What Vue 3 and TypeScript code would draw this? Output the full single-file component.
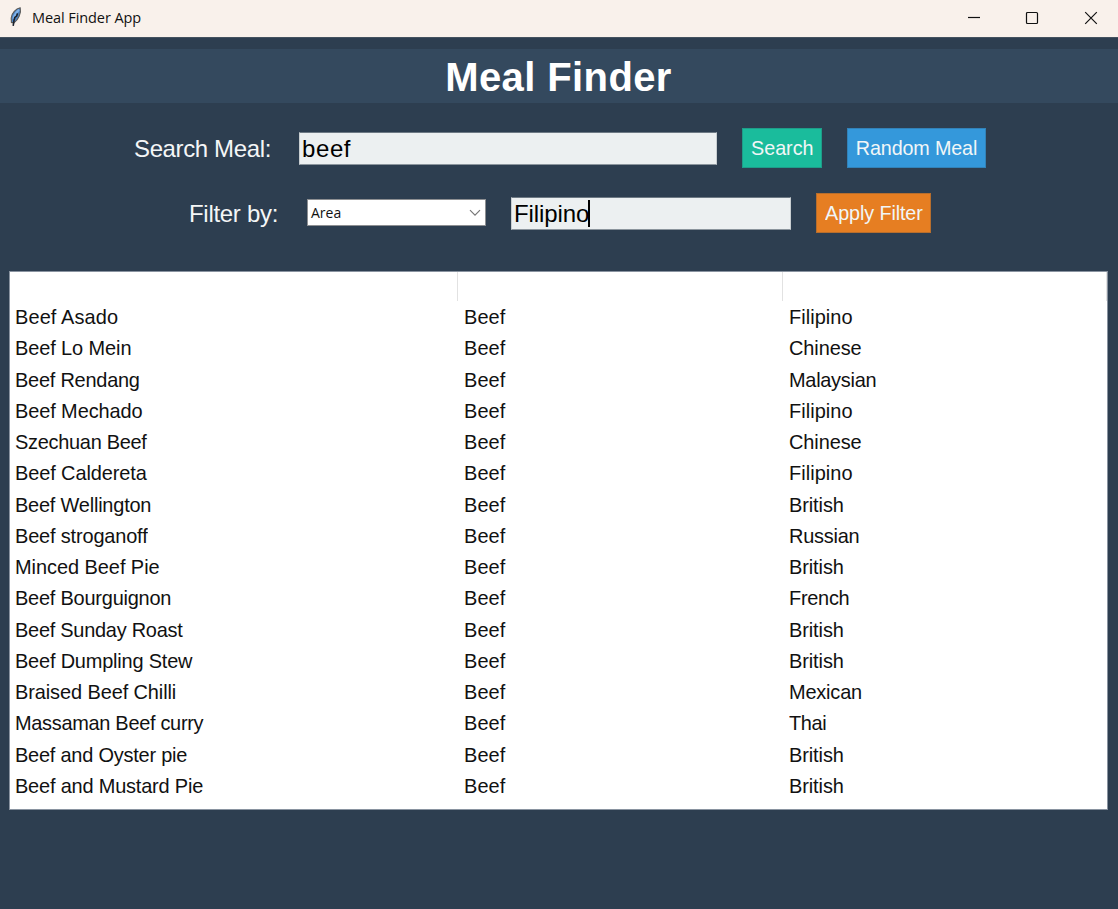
<script setup lang="ts">
import { ref } from 'vue'

interface Cell {
  text: string
  tracking: number
}

const query = ref('beef')
const filterValue = ref('Filipino')

const areaTracking: Record<string, number> = {
  Filipino: 0.05,
  Chinese: -0.1,
  Malaysian: -0.3,
  British: -0.1,
  Russian: -0.25,
  French: -0.3,
  Mexican: -0.2,
  Thai: -0.4,
}

const entries: [string, number, string][] = [
  ['Beef Asado', 0.12, 'Filipino'],
  ['Beef Lo Mein', -0.1, 'Chinese'],
  ['Beef Rendang', -0.25, 'Malaysian'],
  ['Beef Mechado', -0.1, 'Filipino'],
  ['Szechuan Beef', -0.3, 'Chinese'],
  ['Beef Caldereta', -0.1, 'Filipino'],
  ['Beef Wellington', -0.22, 'British'],
  ['Beef stroganoff', -0.17, 'Russian'],
  ['Minced Beef Pie', -0.05, 'British'],
  ['Beef Bourguignon', -0.23, 'French'],
  ['Beef Sunday Roast', -0.27, 'British'],
  ['Beef Dumpling Stew', -0.2, 'British'],
  ['Braised Beef Chilli', -0.1, 'Mexican'],
  ['Massaman Beef curry', -0.32, 'Thai'],
  ['Beef and Oyster pie', -0.23, 'British'],
  ['Beef and Mustard Pie', -0.2, 'British'],
]

const rows: Cell[][] = entries.map(([name, tracking, area]) => [
  { text: name, tracking },
  { text: 'Beef', tracking: 0.1 },
  { text: area, tracking: areaTracking[area] },
])
</script>

<template>
  <div class="window">
    <header class="titlebar">
      <svg class="feather" width="14" height="22" viewBox="0 0 14 22">
        <path d="M11.2 1.8 C7 2.6 2.6 7 2.2 12 L2.4 16.4 L5 16.8 C9 14 12.6 7 11.2 1.8Z" fill="#4f86c6" stroke="#5c5a58" stroke-width="1.1" />
        <path d="M10 3.8 C7.4 6 5.4 9 4.4 13" fill="none" stroke="#7fb2ea" stroke-width="2" />
        <path d="M8.6 7.4 L7.6 10 L5.8 11.5 L5 14.5 L4.2 19.8" fill="none" stroke="#1c222b" stroke-width="1.6" />
      </svg>
      <span class="caption">Meal Finder App</span>
      <div class="controls">
        <svg width="14" height="14" viewBox="0 0 14 14"><path d="M2 6.5H14" /></svg>
        <svg width="14" height="14" viewBox="0 0 14 14"><rect x="1.5" y="1.5" width="11" height="11" rx="1" /></svg>
        <svg width="14" height="14" viewBox="0 0 14 14"><path d="M1.2 1.2L12.8 12.8M12.8 1.2L1.2 12.8" /></svg>
      </div>
    </header>

    <h1 class="banner"><span>Meal Finder</span></h1>

    <div class="row search-row">
      <span class="label search-label">Search Meal:</span>
      <div class="entry query">{{ query }}</div>
      <button class="btn search"><span>Search</span></button>
      <button class="btn random"><span>Random Meal</span></button>
    </div>

    <div class="row filter-row">
      <span class="label filter-label">Filter by:</span>
      <div class="combo">
        <span>Area</span>
        <svg width="12" height="8" viewBox="0 0 12 8"><path d="M1 1.2L6 6.2L11 1.2" /></svg>
      </div>
      <div class="entry value">{{ filterValue }}<i class="caret"></i></div>
      <button class="btn apply"><span>Apply Filter</span></button>
    </div>

    <div class="tree">
      <div class="line head"><div></div><div></div><div></div></div>
      <div v-for="row in rows" :key="row[0].text" class="line">
        <div v-for="(cell, i) in row" :key="i" class="cell">
          <span :style="{ letterSpacing: cell.tracking + 'px' }">{{ cell.text }}</span>
        </div>
      </div>
    </div>
  </div>
</template>

<style>
body {
  margin: 0;
  background: #2d3e50;
}
</style>

<style scoped>
.window {
  width: 1118px;
  height: 909px;
  overflow: hidden;
  background: #2d3e50;
  font-family: "Liberation Sans", Arial, sans-serif;
}

.titlebar {
  display: flex;
  align-items: center;
  height: 37px;
  box-sizing: border-box;
  padding: 0 20px 1px 9px;
  background: #f9f1eb;
  box-shadow: 0 1px 0 #44525f;
}

.feather {
  margin-top: -3px;
}

.caption {
  margin: -2px 0 0 9px;
  font: 14.5px "Open Sans", "Noto Sans", sans-serif;
  letter-spacing: -0.08px;
  color: #111;
}

.controls {
  display: flex;
  gap: 45px;
  margin-left: auto;
}

.controls svg {
  fill: none;
  stroke: #111;
  stroke-width: 1.2;
}

.banner {
  display: flex;
  justify-content: center;
  align-items: center;
  height: 54px;
  box-sizing: border-box;
  padding: 2px 1px 0 0;
  margin: 12px 0 0;
  background: #34495e;
  color: #fff;
  font-size: 40px;
  font-weight: bold;
  letter-spacing: 0.4px;
}

.row {
  display: flex;
  align-items: center;
  height: 40px;
}

.search-row {
  margin-top: 25px;
  padding-left: 134px;
}

.filter-row {
  margin-top: 25px;
  padding-left: 189px;
}

.label {
  box-sizing: border-box;
  padding-top: 2px;
  font-size: 24px;
  color: #f4f6f7;
  white-space: nowrap;
}

.search-label {
  width: 165px;
  letter-spacing: -0.37px;
}

.filter-label {
  width: 118px;
  letter-spacing: -0.3px;
}

.entry {
  display: flex;
  align-items: center;
  height: 33px;
  box-sizing: border-box;
  border: 1px solid #8b959d;
  border-top-color: #6d7984;
  border-left-color: #c8ced1;
  border-right-color: #c8ced1;
  padding: 1px 0 0 2px;
  background: #ecf0f1;
  color: #000;
  font-size: 24px;
}

.query {
  width: 418px;
  letter-spacing: 0.6px;
}

.value {
  width: 280px;
  margin-left: 25px;
  letter-spacing: -0.1px;
}

.caret {
  width: 2px;
  height: 27px;
  margin: -1px 0 0 -1px;
  background: #000;
}

.btn {
  height: 40px;
  margin: 0 0 0 25px;
  padding: 0 0 1px;
  border: 1px solid rgba(45, 62, 80, 0.25);
  border-radius: 0;
  color: #f1f6f7;
  font-family: inherit;
  font-size: 21px;
  white-space: nowrap;
}

.btn span {
  display: inline-block;
  transform: scaleX(0.94);
}

.search {
  width: 80px;
  background-color: #1abc9c;
}

.random {
  width: 139px;
  background-color: #3498db;
}

.random span {
  margin: 0 -4px;
  letter-spacing: -0.15px;
}

.apply {
  width: 115px;
  background-color: #e67e22;
}

.apply span {
  letter-spacing: -0.1px;
}

.combo {
  display: flex;
  align-items: center;
  justify-content: space-between;
  width: 179px;
  height: 27px;
  box-sizing: border-box;
  margin-top: -2px;
  padding: 0 4px 0 3px;
  border: 1px solid #8d8f92;
  background: #fff;
  color: #111;
  font: 14px "Open Sans", "Noto Sans", sans-serif;
}

.combo svg {
  margin-top: 2px;
  fill: none;
  stroke: #777;
  stroke-width: 1.2;
}

.tree {
  width: 1099px;
  height: 539px;
  box-sizing: border-box;
  margin: 38px 0 0 9px;
  border: 1px solid #8993a0;
  background: #fff;
  color: #111;
  font-size: 21px;
}

.line {
  display: grid;
  grid-template-columns: 448px 325px 324px;
  height: 31.25px;
  line-height: 31.25px;
  white-space: nowrap;
}

.cell {
  padding-left: 5px;
}

.cell + .cell {
  padding-left: 5.7px;
}

.cell span {
  display: inline-block;
  transform: scaleX(0.95);
  transform-origin: left;
}

.head {
  height: 29px;
}

.head div {
  border-right: 1px solid #e2e2e2;
}
</style>
